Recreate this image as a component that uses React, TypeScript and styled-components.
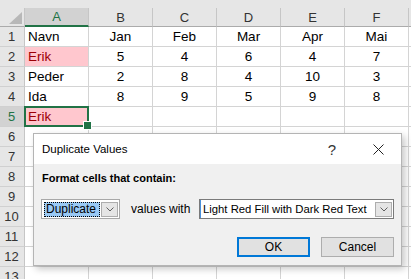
import { Fragment } from 'react';
import styled, { createGlobalStyle } from 'styled-components';

const GlobalStyle = createGlobalStyle`
  html, body {
    margin: 0;
    padding: 0;
    background: #fff;
  }
  body {
    font-family: "Liberation Sans", Arial, sans-serif;
    overflow: hidden;
  }
  * {
    box-sizing: border-box;
  }
`;

const Screen = styled.div`
  position: relative;
  width: 411px;
  height: 279px;
  overflow: hidden;
  background: #fff;
`;

const TopStrip = styled.div`
  height: 8px;
  background: #e6e6e6;
`;

const Sheet = styled.div`
  display: grid;
  grid-template-columns: 25px repeat(6, 64px) 1fr;
  grid-template-rows: 19px;
  grid-auto-rows: 20px;
  font-size: 13.5px;
  color: #000;
`;

const Corner = styled.div`
  background: #e6e6e6;
  border-right: 1px solid #c6c6c6;
  border-bottom: 1px solid #ababab;
  display: flex;
  align-items: flex-end;
  justify-content: flex-end;
  padding: 0 2px 2px 0;
`;

const ColHead = styled.div<{ $active?: boolean }>`
  background: ${(p) => (p.$active ? '#d2d2d2' : '#e6e6e6')};
  color: ${(p) => (p.$active ? '#217346' : '#333')};
  border-right: 1px solid #c6c6c6;
  border-bottom: ${(p) => (p.$active ? '2px solid #217346' : '1px solid #ababab')};
  font-size: 13px;
  display: flex;
  align-items: center;
  justify-content: center;
`;

const RowHead = styled.div<{ $active?: boolean }>`
  background: ${(p) => (p.$active ? '#d2d2d2' : '#e6e6e6')};
  color: ${(p) => (p.$active ? '#217346' : '#333')};
  border-right: 1px solid #c6c6c6;
  border-bottom: 1px solid #d0d0d0;
  font-size: 13px;
  display: flex;
  align-items: center;
  justify-content: center;
  padding-right: 1px;
`;

const Cell = styled.div<{ $align?: 'left' | 'center'; $dup?: boolean; $selected?: boolean }>`
  position: relative;
  z-index: ${(p) => (p.$selected ? 2 : 0)};
  background: ${(p) => (p.$dup ? '#ffc7ce' : '#fff')};
  color: ${(p) => (p.$dup ? '#9c0006' : '#000')};
  border-right: 1px solid #d4d4d4;
  border-bottom: 1px solid #d4d4d4;
  padding: 0 3px;
  line-height: 19px;
  text-align: ${(p) => (p.$align === 'left' ? 'left' : 'center')};
  white-space: nowrap;

  ${(p) =>
    p.$selected &&
    `
    &::after {
      content: '';
      position: absolute;
      top: -1px;
      left: -1px;
      right: -1px;
      bottom: -1px;
      border: 2px solid #217346;
      pointer-events: none;
    }
    &::before {
      content: '';
      position: absolute;
      right: -4px;
      bottom: -4px;
      width: 7px;
      height: 7px;
      background: #217346;
      border: 1px solid #fff;
      z-index: 3;
    }
  `}
`;

const Dialog = styled.div`
  position: absolute;
  left: 33px;
  top: 133px;
  width: 369px;
  height: 133px;
  background: #f0f0f0;
  border: 1px solid #b4b4b4;
  box-shadow: 3px 3px 7px rgba(0, 0, 0, 0.22);
  z-index: 5;
  font-size: 12px;
  color: #000;
  display: flex;
  flex-direction: column;
`;

const TitleBar = styled.div`
  height: 30px;
  background: #fff;
  display: flex;
  align-items: center;
  padding-left: 8px;
`;

const Title = styled.div`
  flex: 1;
  font-size: 11.5px;
`;

const CaptionButton = styled.div`
  width: 46px;
  height: 30px;
  display: flex;
  align-items: center;
  justify-content: center;
  font-size: 15px;
  color: #333;
`;

const Body = styled.div`
  padding: 6px 7px 0 7px;
  display: flex;
  flex-direction: column;
`;

const Heading = styled.div`
  font-weight: bold;
  font-size: 11px;
  line-height: 16px;
  height: 16px;
  padding-left: 1px;
`;

const ComboRow = styled.div`
  margin-top: 13px;
  display: flex;
  align-items: center;
`;

const Combo = styled.div<{ $width: number; $dark?: boolean }>`
  width: ${(p) => p.$width}px;
  height: 20px;
  background: #fff;
  border: 1px solid ${(p) => (p.$dark ? '#7a7a7a' : '#a8a8a8')};
  display: flex;
  align-items: center;
  padding: 0 1px 0 2px;
  gap: 1px;
`;

const ComboWide = styled(Combo)`
  margin-left: auto;
  padding-left: 2px;
  box-shadow: inset 1px 0 0 #4a90d9;
`;

const Highlight = styled.div`
  width: 57px;
  height: 15px;
  background: #99c9f5;
  border: 1px dotted #000;
  line-height: 13px;
  padding-left: 1px;
  white-space: nowrap;
`;

const ComboText = styled.div`
  flex: 1;
  font-size: 11.3px;
  white-space: nowrap;
  overflow: hidden;
  padding-left: 1px;
`;

const DropButton = styled.div`
  width: 17px;
  height: 15px;
  background: #e5e5e5;
  border: 1px solid #adadad;
  display: flex;
  align-items: center;
  justify-content: center;
`;

const Label = styled.div`
  margin-left: 11px;
`;

const ButtonRow = styled.div`
  margin-top: 18px;
  display: flex;
  justify-content: flex-end;
  gap: 11px;
`;

const Button = styled.div<{ $primary?: boolean }>`
  width: 73px;
  height: 20px;
  background: #e1e1e1;
  border: ${(p) => (p.$primary ? '2px solid #0078d7' : '1px solid #adadad')};
  display: flex;
  align-items: center;
  justify-content: center;
`;

const Chevron = () => (
  <svg width="8" height="5" viewBox="0 0 8 5">
    <path d="M0.5 0.5 L4 4 L7.5 0.5" fill="none" stroke="#606060" strokeWidth="1" />
  </svg>
);

const CornerMark = () => (
  <svg width="13" height="12" viewBox="0 0 13 12">
    <polygon points="13,0 13,12 0,12" fill="#b8b8b8" />
  </svg>
);

const CloseIcon = () => (
  <svg width="11" height="11" viewBox="0 0 11 11">
    <path d="M0.5 0.5 L10.5 10.5 M10.5 0.5 L0.5 10.5" stroke="#222" strokeWidth="1" />
  </svg>
);

type Row = { cells: string[]; dup?: boolean; selected?: boolean };

const cols = ['A', 'B', 'C', 'D', 'E', 'F'];

const rows: Row[] = [
  { cells: ['Navn', 'Jan', 'Feb', 'Mar', 'Apr', 'Mai'] },
  { cells: ['Erik', '5', '4', '6', '4', '7'], dup: true },
  { cells: ['Peder', '2', '8', '4', '10', '3'] },
  { cells: ['Ida', '8', '9', '5', '9', '8'] },
  { cells: ['Erik', '', '', '', '', ''], dup: true, selected: true },
  ...Array.from({ length: 8 }, () => ({ cells: ['', '', '', '', '', ''] })),
];

export default function App() {
  return (
    <Screen>
      <GlobalStyle />
      <TopStrip />
      <Sheet>
        <Corner>
          <CornerMark />
        </Corner>
        {cols.map((c) => (
          <ColHead key={c} $active={c === 'A'}>
            {c}
          </ColHead>
        ))}
        <ColHead />
        {rows.map((row, r) => (
          <Fragment key={r}>
            <RowHead $active={row.selected}>{r + 1}</RowHead>
            {row.cells.map((v, c) => (
              <Cell
                key={c}
                $align={c === 0 ? 'left' : 'center'}
                $dup={c === 0 && row.dup}
                $selected={c === 0 && row.selected}
              >
                {v}
              </Cell>
            ))}
            <Cell />
          </Fragment>
        ))}
      </Sheet>

      <Dialog>
        <TitleBar>
          <Title>Duplicate Values</Title>
          <CaptionButton>?</CaptionButton>
          <CaptionButton>
            <CloseIcon />
          </CaptionButton>
        </TitleBar>
        <Body>
          <Heading>Format cells that contain:</Heading>
          <ComboRow>
            <Combo $width={79}>
              <Highlight>Duplicate</Highlight>
              <DropButton>
                <Chevron />
              </DropButton>
            </Combo>
            <Label>values with</Label>
            <ComboWide $width={195} $dark>
              <ComboText>Light Red Fill with Dark Red Text</ComboText>
              <DropButton>
                <Chevron />
              </DropButton>
            </ComboWide>
          </ComboRow>
          <ButtonRow>
            <Button $primary>OK</Button>
            <Button>Cancel</Button>
          </ButtonRow>
        </Body>
      </Dialog>
    </Screen>
  );
}
